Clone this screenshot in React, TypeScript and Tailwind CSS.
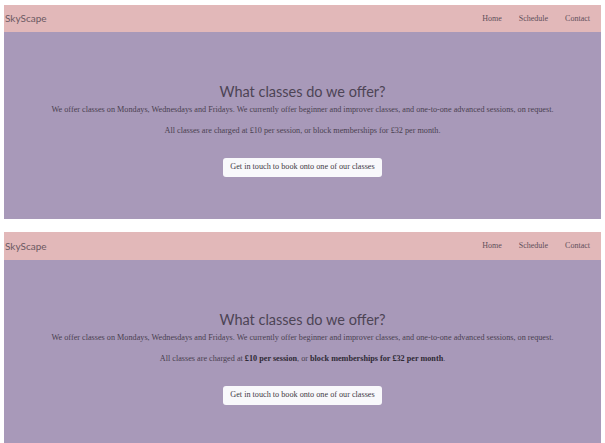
const sans = "font-['Lato','Inter',sans-serif]";
const serif = "font-['Liberation_Serif','DejaVu_Serif',serif]";

function Panel({ bold, headerH }: { bold?: boolean; headerH: string }) {
  return (
    <div className="w-[597px] ml-[4px]">
      <header className={`flex items-center justify-between bg-[#e2b8b9] ${headerH}`}>
        <span className={`${sans} pl-[1px] text-[10px] text-[#6b5862]`}>SkyScape</span>
        <nav className={`${serif} flex gap-[17px] pr-[11px] text-[8px] text-[#5f4f5a]`}>
          <a>Home</a>
          <a>Schedule</a>
          <a>Contact</a>
        </nav>
      </header>
      <section className="flex flex-col items-center bg-[#a899b9] pt-[50px] pb-[42px] text-[#4a4150]">
        <h2 className={`${sans} text-[14.5px] leading-[20px] text-[#4d4455]`}>What classes do we offer?</h2>
        <p className={`${serif} mt-[2px] text-[8.2px] leading-[12px]`}>
          We offer classes on Mondays, Wednesdays and Fridays. We currently offer beginner and improver classes, and one-to-one advanced sessions, on request.
        </p>
        <p className={`${serif} mt-[9px] text-[8.2px] leading-[12px]`}>
          All classes are charged at {bold ? <b className="text-[#2f2a35]">£10 per session</b> : "£10 per session"}, or{" "}
          {bold ? <b className="text-[#2f2a35]">block memberships for £32 per month</b> : "block memberships for £32 per month"}.
        </p>
        <button className={`${serif} mt-[21px] h-[19px] rounded-[3px] bg-[#f8f8fb] px-[7px] text-[8.2px] text-[#3f3a45]`}>
          Get in touch to book onto one of our classes
        </button>
      </section>
    </div>
  );
}

export default function App() {
  return (
    <div className="h-[443px] w-[605px] overflow-hidden bg-white pt-[5px]">
      <Panel headerH="h-[27px]" />
      <div className="h-[13px]" />
      <Panel bold headerH="h-[28px]" />
    </div>
  );
}
